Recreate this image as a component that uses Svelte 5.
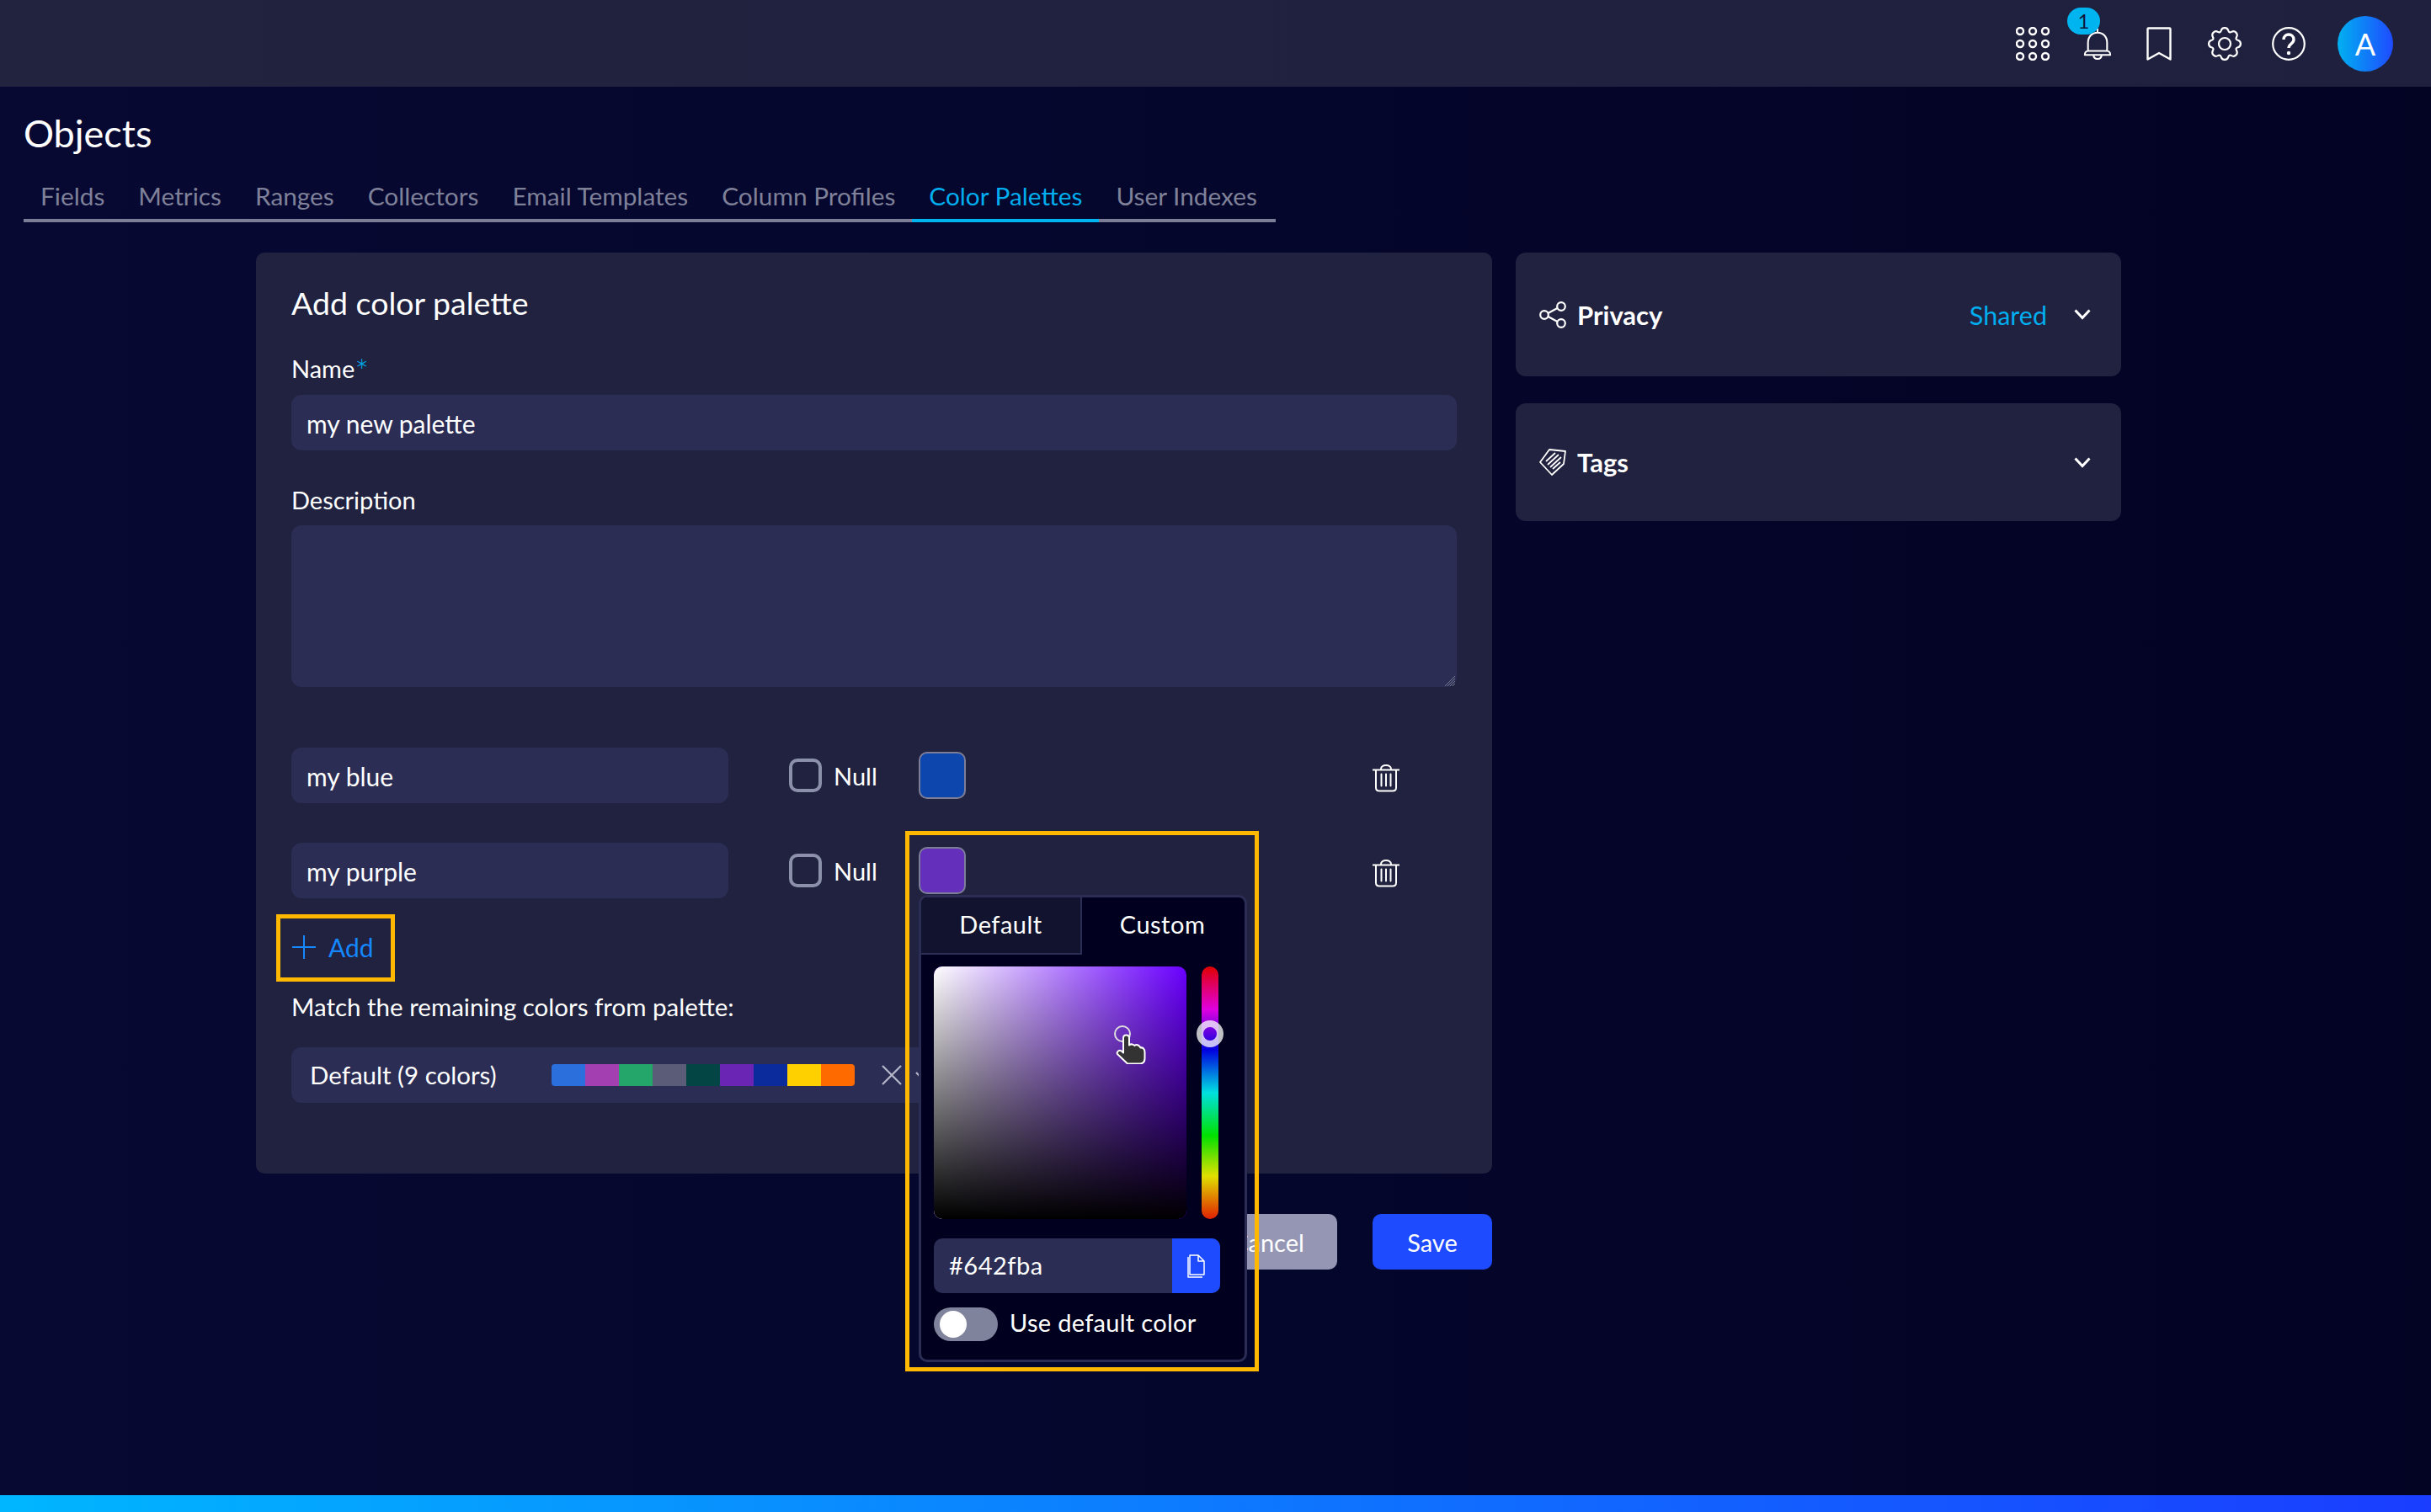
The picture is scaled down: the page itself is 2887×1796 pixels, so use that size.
<script>
  const tabs = ['Fields', 'Metrics', 'Ranges', 'Collectors', 'Email Templates', 'Column Profiles', 'Color Palettes', 'User Indexes'];
  const rows = [
    { name: 'my blue', color: '#0d47ad' },
    { name: 'my purple', color: '#642fba' }
  ];
  const palette = ['#2a6fdb', '#a33fb0', '#24a66b', '#5a5c78', '#034444', '#6a25b5', '#0b2a9c', '#ffd000', '#ff6a00'];

  // rounded gear outline: 8 cogs, smoothed through the midpoints
  function gearPath() {
    const pts = [];
    for (let i = 0; i < 8; i++) {
      const a = (i * Math.PI) / 4 - Math.PI / 2;
      const step = Math.PI / 4;
      pts.push([a - step * 0.22, 19.2], [a + step * 0.22, 19.2], [a + step * 0.5, 13.5]);
    }
    const xy = ([t, r]) => [20 + r * Math.cos(t), 20 + r * Math.sin(t)];
    const p = pts.map(xy);
    const mid = (a, b) => [(a[0] + b[0]) / 2, (a[1] + b[1]) / 2];
    let start = mid(p[p.length - 1], p[0]);
    let d = `M${start[0].toFixed(2)} ${start[1].toFixed(2)}`;
    p.forEach((c, i) => {
      const m = mid(c, p[(i + 1) % p.length]);
      d += `Q${c[0].toFixed(2)} ${c[1].toFixed(2)} ${m[0].toFixed(2)} ${m[1].toFixed(2)}`;
    });
    return d + 'z';
  }
</script>

<div class="page">
  <header class="topbar">
    <svg class="ico grid" viewBox="0 0 40 40" fill="none" stroke="#fff" stroke-width="2.4">
      {#each [5, 20, 35] as y}
        {#each [5, 20, 35] as x}
          <circle cx={x} cy={y} r="4" />
        {/each}
      {/each}
    </svg>
    <div class="bell">
      <svg class="ico" viewBox="0 0 36 40" fill="none" stroke="#fff" stroke-width="2.2" stroke-linejoin="round">
        <path d="M18 1v5M6 29V19C6 11 11 6 18 6s12 5 12 13v10M2 34c0-3 2-5 4-5h24c2 0 4 2 4 5z" />
        <path d="M13 34c0 3 2 5 5 5s5-2 5-5" />
      </svg>
      <span class="badge">1</span>
    </div>
    <svg class="ico mark" viewBox="0 0 30 40" fill="none" stroke="#fff" stroke-width="2.4" stroke-linejoin="round">
      <path d="M1.500 2.500q0-1 1-1h25q1 0 1 1v36L15 31 1.500 38.500z" />
    </svg>
    <svg class="ico gear" viewBox="0 0 40 40" fill="none" stroke="#fff" stroke-width="2.200" stroke-linejoin="round">
      <circle cx="20" cy="20" r="7" />
      <path d={gearPath()} />
    </svg>
    <svg class="ico help" viewBox="0 0 40 40" fill="none" stroke="#fff" stroke-width="2.200">
      <circle cx="20" cy="20" r="18.800" />
      <path d="M14 15c0-4 3-6 6-6s6 2 6 6c0 5-6 5-6 10" stroke-width="3.400" />
      <circle cx="20" cy="31" r="2.200" fill="#fff" stroke="none" />
    </svg>
    <div class="avatar">A</div>
  </header>

  <h1>Objects</h1>
  <nav class="tabs">
    {#each tabs as t}
      <span class="tab" class:active={t === 'Color Palettes'}>{t}</span>
    {/each}
  </nav>

  <main class="content">
    <div class="left-col">
      <section class="card">
        <h2>Add color palette</h2>
        <label class="lbl" for="pal-name">Name<span class="req">*</span></label>
        <div class="input" id="pal-name">my new palette</div>
        <div class="lbl desc">Description</div>
        <div class="textarea">
          <svg class="grip" viewBox="0 0 12 12" stroke="#77798f" stroke-width="1"><path d="M12 0L0 12M12 3l-9 9M12 6l-6 6M12 9l-3 3" /></svg>
        </div>

        {#each rows as r}
          <div class="row">
            <div class="input short">{r.name}</div>
            <span class="check"></span>
            <span class="null">Null</span>
            <span class="swatch" style="background:{r.color}"></span>
            <svg class="trash" viewBox="0 0 32 32" fill="none" stroke="#fff" stroke-width="2" stroke-linecap="round">
              <path d="M0 6h32M10 5c0-6 12-6 12 0M4 6v21q0 4 4 4h16q4 0 4-4V6M10.500 11v14M16 11v14M21.500 11v14" />
            </svg>
          </div>
        {/each}

        <div class="add">
          <svg class="plus" viewBox="0 0 28 28" stroke="#1587ff" stroke-width="2"><path d="M14 0v28M0 14h28" /></svg>
          <span>Add</span>
        </div>
        <div class="match">Match the remaining colors from palette:</div>
        <div class="select">
          <span class="sel-name">Default (9 colors)</span>
          <div class="bar">
            {#each palette as c}
              <i style="background:{c}"></i>
            {/each}
          </div>
          <svg class="x" viewBox="0 0 24 24" stroke="#b5b6c8" stroke-width="2.200"><path d="M1 1l22 22M23 1L1 23" /></svg>
          <svg class="chev-small" viewBox="0 0 14 8" fill="none" stroke="#b5b6c8" stroke-width="2.200"><path d="M1 1l6 6 6-6" /></svg>
        </div>
      </section>
      <div class="actions">
        <button class="btn cancel">Cancel</button>
        <button class="btn save">Save</button>
      </div>

      <!-- yellow annotations and the open picker sit over the form -->
      <div class="hl hl-add"></div>
      <div class="picker">
        <div class="pk-tabs">
          <span class="pk-tab on">Default</span>
          <span class="pk-tab">Custom</span>
        </div>
        <div class="pk-body">
          <div class="sv">
            <div class="sv-white"></div>
            <div class="sv-black"></div>
            <span class="sv-dot"></span>
            <svg class="hand" viewBox="0 0 36 36">
              <path d="M9 5q0-3.500 3.500-3.500T16 5v8.500q1.500-1.500 3.500-1t3 1.500q2-1.500 4-.5t3 3q2-.5 3.500 1t1.500 4.500v7q0 6-5.500 6.500H14L2 24q-1-2 1-3.500t4 0l2 2z" fill="#333" stroke="#fff" stroke-width="2" stroke-linejoin="round" />
            </svg>
          </div>
          <div class="hue"><span class="hue-thumb"></span></div>
        </div>
        <div class="hex">
          <span class="hex-val">#642fba</span>
          <span class="copy">
            <svg viewBox="0 0 21 28" fill="none" stroke="#fff" stroke-width="1.500" stroke-linejoin="round">
              <path d="M3 1h10l7 7v16H3zM13 1v7h7M1 3v24h17" />
            </svg>
          </span>
        </div>
        <div class="default-row">
          <span class="toggle"><span class="knob"></span></span>
          <span class="default-lbl">Use default color</span>
        </div>
      </div>
      <div class="hl hl-picker"></div>
    </div>

    <aside class="side">
      <div class="panel privacy">
        <svg class="panel-ico" viewBox="0 0 32 32" fill="none" stroke="#fff" stroke-width="2.200">
          <circle cx="26" cy="6" r="4.800" /><circle cx="6" cy="16" r="4.800" /><circle cx="26" cy="26" r="4.800" />
          <path d="M10.500 14l11-6M10.500 18l11 6" />
        </svg>
        <span class="panel-title">Privacy</span>
        <span class="shared">Shared</span>
        <svg class="chev" viewBox="0 0 20 13" fill="none" stroke="#fff" stroke-width="3"><path d="M1.500 1.500L10 10.500l8.500-9" /></svg>
      </div>
      <div class="panel tags">
        <svg class="panel-ico" viewBox="0 0 32 32" fill="none" stroke="#fff" stroke-width="1.800" stroke-linejoin="round">
          <path d="M12 1l19 2-2 15-14 13L1 16z" />
          <path d="M8 15l11-10M10 19l13-12M13 22L26 10M16 24l9-8" />
        </svg>
        <span class="panel-title">Tags</span>
        <svg class="chev" viewBox="0 0 20 13" fill="none" stroke="#fff" stroke-width="3"><path d="M1.500 1.500L10 10.500l8.500-9" /></svg>
      </div>
    </aside>
  </main>

  <div class="footbar"></div>
</div>

<style>
  :global(body) {
    margin: 0;
    background: #03052b;
    font-family: Lato, "Noto Sans", sans-serif;
    color: #fff;
  }

  .page {
    position: relative;
    width: 2887px;
    height: 1796px;
    overflow: hidden;
    display: flex;
    flex-direction: column;
    background: linear-gradient(90deg, #070933, #030324);
  }

  /* top bar */
  .topbar {
    height: 103px;
    flex: none;
    background: linear-gradient(90deg, #21233f, #1f203e);
    display: flex;
    align-items: center;
    justify-content: flex-end;
    padding-right: 45px;
  }
  .ico {
    display: block;
    height: 40px;
  }
  .grid { width: 40px; margin-right: 40px; }
  .bell { position: relative; margin-right: 41px; }
  .bell .ico { width: 34px; }
  .badge {
    position: absolute;
    left: -19px;
    top: -23px;
    width: 39px;
    height: 32px;
    border-radius: 16px;
    background: #00b4f0;
    color: #12153a;
    font-size: 24px;
    line-height: 32px;
    text-align: center;
  }
  .mark { width: 30px; margin-right: 43px; }
  .gear { width: 40px; margin-right: 36px; }
  .help { width: 40px; margin-right: 38px; }
  .avatar {
    width: 66px;
    height: 66px;
    border-radius: 50%;
    background: linear-gradient(90deg, #00b0f0, #1f4bff);
    text-align: center;
    line-height: 66px;
    font-size: 36px;
  }

  h1 {
    margin: 28px 0 0 28px;
    font-size: 45px;
    line-height: 54px;
    font-weight: 400;
  }
  .tabs {
    margin: 27px 0 0 28px;
    width: 1487px;
    height: 52px;
    box-sizing: border-box;
    border-bottom: 4px solid #7c7e98;
    display: flex;
  }
  .tab {
    flex: none;
    white-space: nowrap;
    height: 52px;
    box-sizing: border-box;
    padding: 0 20px;
    line-height: 42px;
    font-size: 29.800px;
    color: #7f8199;
  }
  .tab.active {
    color: #00aeef;
    border-bottom: 4px solid #00b4f0;
  }

  .content {
    flex: 1;
    display: flex;
    padding: 36px 0 0 304px;
    gap: 28px;
  }
  .left-col {
    position: relative;
    width: 1468px;
  }

  .card {
    height: 1094px;
    box-sizing: border-box;
    padding: 38px 42px 0;
    background: #20223f;
    border-radius: 10px;
  }
  h2 {
    margin: 0;
    font-size: 37.500px;
    font-weight: 400;
    line-height: 44px;
  }
  .lbl {
    display: block;
    margin-top: 36px;
    font-size: 29px;
    line-height: 40px;
    height: 40px;
  }
  .req {
    color: #00aeef;
    font-size: 40px;
    font-weight: 300;
    line-height: 0;
    vertical-align: -7px;
  }
  .lbl.desc { margin-top: 39px; }
  .input {
    height: 66px;
    margin-top: 11px;
    box-sizing: border-box;
    padding-left: 18px;
    background: #2c2d55;
    border-radius: 12px;
    font-size: 30px;
    line-height: 68px;
  }
  .textarea {
    position: relative;
    height: 192px;
    margin-top: 10px;
    margin-bottom: 72px;
    background: #2c2d55;
    border-radius: 12px;
  }
  .grip {
    position: absolute;
    right: 2px;
    bottom: 1px;
    width: 12px;
    height: 12px;
  }

  .row {
    display: flex;
    align-items: center;
    height: 66px;
    margin-bottom: 47px;
  }
  .input.short {
    width: 519px;
    margin-top: 0;
    flex: none;
  }
  .check {
    width: 39px;
    height: 40px;
    box-sizing: border-box;
    margin-left: 72px;
    border: 4px solid #8c90ab;
    border-radius: 10px;
    flex: none;
  }
  .null {
    margin-left: 14px;
    width: 101px;
    font-size: 29px;
    flex: none;
  }
  .swatch {
    width: 56px;
    height: 56px;
    box-sizing: border-box;
    border: 2px solid #7c7e98;
    border-radius: 10px;
    flex: none;
  }
  .trash {
    width: 32px;
    height: 33px;
    margin: 6px 0 0 483px;
    flex: none;
  }

  .add {
    display: flex;
    align-items: center;
    gap: 15px;
    margin-top: -22px;
    height: 66px;
    color: #1587ff;
    font-size: 30px;
  }
  .plus {
    width: 28px;
    height: 28px;
    margin-left: 1px;
  }
  .match {
    font-size: 29.500px;
    line-height: 40px;
    margin-top: 18px;
  }
  .select {
    position: relative;
    display: flex;
    align-items: center;
    width: 780px;
    height: 66px;
    margin-top: 28px;
    padding-left: 22px;
    box-sizing: border-box;
    background: #2c2d55;
    border-radius: 12px;
    font-size: 29.500px;
  }
  .sel-name {
    width: 287px;
    margin-top: -2px;
    flex: none;
  }
  .bar {
    display: flex;
    width: 360px;
    height: 26px;
    border-radius: 4px;
    overflow: hidden;
    flex: none;
  }
  .bar i { flex: 1; }
  .x {
    width: 24px;
    height: 24px;
    margin-left: 32px;
    flex: none;
  }
  .chev-small {
    width: 14px;
    height: 8px;
    margin-left: 16px;
    flex: none;
  }

  .actions {
    display: flex;
    justify-content: flex-end;
    gap: 42px;
    margin-top: 48px;
  }
  .btn {
    width: 142px;
    height: 66px;
    border: 0;
    border-radius: 10px;
    color: #fff;
    font-family: inherit;
    font-size: 29px;
  }
  .btn.cancel { width: 164px; background: #9496b4; }
  .save { background: #1f4bff; }

  /* annotations: offsets relative to the left column */
  .hl {
    position: absolute;
    box-sizing: border-box;
    border: 5px solid #ffb800;
    pointer-events: none;
  }
  .hl-add {
    left: 24px;
    top: 786px;
    width: 141px;
    height: 80px;
  }
  .hl-picker {
    left: 771px;
    top: 687px;
    width: 420px;
    height: 642px;
  }

  .picker {
    position: absolute;
    left: 787px;
    top: 763px;
    width: 390px;
    height: 555px;
    box-sizing: border-box;
    background: #01011f;
    border: 3px solid #2c2d55;
    border-radius: 10px;
    overflow: hidden;
  }
  .pk-tabs {
    display: flex;
    height: 68px;
    font-size: 29px;
  }
  .pk-tab {
    width: 191px;
    text-align: center;
    line-height: 64px;
    letter-spacing: 0.5px;
  }
  .pk-tab.on {
    box-sizing: border-box;
    background: #11132f;
    border-right: 2px solid #2c2d55;
    border-bottom: 2px solid #2c2d55;
  }
  .pk-body {
    display: flex;
    margin: 14px 0 0 15px;
    gap: 18px;
  }
  .sv {
    position: relative;
    width: 300px;
    height: 300px;
    border-radius: 10px;
    background: #6a00ff;
  }
  .sv-white, .sv-black {
    position: absolute;
    inset: 0;
    border-radius: 10px;
  }
  .sv-white { background: linear-gradient(90deg, #fff, rgba(255, 255, 255, 0)); }
  .sv-black { background: linear-gradient(180deg, rgba(0, 0, 0, 0), #000); }
  .sv-dot {
    position: absolute;
    left: 214px;
    top: 70px;
    width: 20px;
    height: 20px;
    box-sizing: border-box;
    border: 2px solid #ddd;
    border-radius: 50%;
  }
  .hand {
    position: absolute;
    left: 216px;
    top: 80px;
    width: 36px;
    height: 36px;
  }
  .hue {
    position: relative;
    width: 20px;
    height: 300px;
    border-radius: 10px;
    background: linear-gradient(180deg, #e00000 0%, #e000e0 17%, #0000e0 33%, #00e0e0 50%, #00e000 67%, #e0e000 83%, #e02000 100%);
  }
  .hue-thumb {
    position: absolute;
    left: -6px;
    top: 64px;
    width: 32px;
    height: 32px;
    box-sizing: border-box;
    border: 8px solid rgba(255, 255, 255, 0.75);
    border-radius: 50%;
  }
  .hex {
    display: flex;
    height: 65px;
    width: 340px;
    margin: 23px 0 0 15px;
    background: #2c2d55;
    border-radius: 10px;
    overflow: hidden;
    font-size: 29px;
  }
  .hex-val {
    flex: 1;
    padding-left: 18px;
    line-height: 64px;
    letter-spacing: 0.5px;
  }
  .copy {
    width: 57px;
    background: #1f4bff;
    display: flex;
    align-items: center;
    justify-content: center;
  }
  .copy svg {
    width: 21px;
    height: 28px;
  }
  .default-row {
    display: flex;
    align-items: center;
    gap: 14px;
    margin: 17px 0 0 15px;
    font-size: 29px;
    letter-spacing: 0.3px;
  }
  .default-lbl { padding-bottom: 5px; }
  .toggle {
    display: block;
    width: 76px;
    height: 40px;
    border-radius: 20px;
    background: #80839c;
    position: relative;
  }
  .knob {
    position: absolute;
    left: 7px;
    top: 4px;
    width: 32px;
    height: 32px;
    border-radius: 50%;
    background: #fff;
  }

  /* right column */
  .side {
    width: 719px;
    display: flex;
    flex-direction: column;
    gap: 32px;
  }
  .panel {
    display: flex;
    align-items: center;
    box-sizing: border-box;
    padding: 0 36px 0 28px;
    background: #20223f;
    border-radius: 12px;
  }
  .privacy { height: 147px; }
  .tags { height: 140px; }
  .panel-ico {
    width: 32px;
    height: 32px;
    flex: none;
  }
  .panel-title {
    margin-left: 13px;
    font-size: 31px;
    font-weight: 700;
    flex: 1;
  }
  .shared {
    color: #00aeef;
    font-size: 30.500px;
    margin-right: 32px;
  }
  .chev {
    width: 20px;
    height: 13px;
    flex: none;
  }

  .footbar {
    position: absolute;
    left: 0;
    right: 0;
    bottom: 0;
    height: 20px;
    background: linear-gradient(90deg, #00b6ff, #1a3dff);
  }
</style>
